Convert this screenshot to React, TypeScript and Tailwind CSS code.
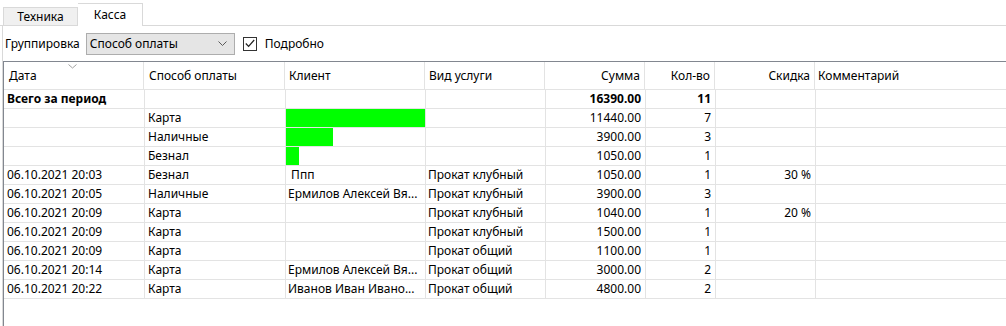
import React from "react";

type Row = {
  date?: string;
  method?: string;
  client?: string;
  bar?: number;
  service?: string;
  sum?: string;
  qty?: string;
  disc?: string;
  bold?: boolean;
};

const rows: Row[] = [
  { date: "Всего за период", sum: "16390.00", qty: "11", bold: true },
  { method: "Карта", bar: 11440, sum: "11440.00", qty: "7" },
  { method: "Наличные", bar: 3900, sum: "3900.00", qty: "3" },
  { method: "Безнал", bar: 1050, sum: "1050.00", qty: "1" },
  { date: "06.10.2021 20:03", method: "Безнал", client: "\u00a0Ппп", service: "Прокат клубный", sum: "1050.00", qty: "1", disc: "30 %" },
  { date: "06.10.2021 20:05", method: "Наличные", client: "Ермилов Алексей Вя...", service: "Прокат клубный", sum: "3900.00", qty: "3" },
  { date: "06.10.2021 20:09", method: "Карта", service: "Прокат клубный", sum: "1040.00", qty: "1", disc: "20 %" },
  { date: "06.10.2021 20:09", method: "Карта", service: "Прокат клубный", sum: "1500.00", qty: "1" },
  { date: "06.10.2021 20:09", method: "Карта", service: "Прокат общий", sum: "1100.00", qty: "1" },
  { date: "06.10.2021 20:14", method: "Карта", client: "Ермилов Алексей Вя...", service: "Прокат общий", sum: "3000.00", qty: "2" },
  { date: "06.10.2021 20:22", method: "Карта", client: "Иванов Иван Ивано...", service: "Прокат общий", sum: "4800.00", qty: "2" },
];

const cell = "h-full border-r border-[#e3e3e3] overflow-hidden whitespace-nowrap flex items-center";

export default function App() {
  return (
    <div className="w-[1006px] h-[326px] bg-white overflow-hidden text-[12px] text-black font-['Noto_Sans',sans-serif] leading-[16px]">
      {/* Tabs */}
      <div className="flex items-end h-[26px]">
        <div className="w-[3px] h-px bg-[#d9d9d9]" />
        <div className="w-[75px] h-[19px] bg-[#f0f0f0] border border-[#d9d9d9] flex items-center justify-center pt-[1px]">
          Техника
        </div>
        <div className="w-[65px] h-[23px] bg-white border border-b-0 border-l-0 border-[#d9d9d9] flex items-center justify-center pb-[1px]">
          Касса
        </div>
        <div className="flex-1 h-px bg-[#d9d9d9]" />
      </div>

      {/* Panel */}
      <div className="ml-[2px] border-l border-[#d9d9d9] h-[300px] flex flex-col">
        {/* Toolbar */}
        <div className="h-[35px] flex items-center pl-[2px] shrink-0">
          <span>Группировка</span>
          <div className="ml-[6px] w-[149px] h-[22px] bg-[#e5e5e5] border border-[#adadad] flex items-center pl-[3px] pr-[7px]">
            <span className="flex-1">Способ оплаты</span>
            <svg width="9" height="5" viewBox="0 0 9 5">
              <polyline points="0.5,0.5 4.5,4.5 8.5,0.5" fill="none" stroke="#5a5a5a" strokeWidth="1" />
            </svg>
          </div>
          <div className="ml-[8px] w-[14px] h-[14px] border border-[#333333] bg-white flex items-center justify-center">
            <svg width="10" height="9" viewBox="0 0 10 9">
              <polyline points="0.8,4.5 3.6,7.4 9.2,1" fill="none" stroke="#222" strokeWidth="1.2" />
            </svg>
          </div>
          <span className="ml-[8px]">Подробно</span>
        </div>

        {/* Table */}
        <div className="flex-1 border-t border-l border-[#828790] flex flex-col">
          {/* Header */}
          <div className="flex h-[28px] border-b border-[#e3e3e3] shrink-0">
            <div className="relative w-[140px] h-full border-r border-[#e3e3e3] flex items-center pl-[5px]">
              Дата
              <svg className="absolute left-[64px] top-[2px]" width="9" height="5" viewBox="0 0 9 5">
                <polyline points="0.5,0.5 4.5,4 8.5,0.5" fill="none" stroke="#a0a0a0" strokeWidth="1" />
              </svg>
            </div>
            <div className="w-[141px] h-full border-r border-[#e3e3e3] flex items-center pl-[5px]">Способ оплаты</div>
            <div className="w-[140px] h-full border-r border-[#e3e3e3] flex items-center pl-[4px]">Клиент</div>
            <div className="w-[120px] h-full border-r border-[#e3e3e3] flex items-center pl-[4px]">Вид услуги</div>
            <div className="w-[100px] h-full border-r border-[#e3e3e3] flex items-center justify-end pr-[4px]">Сумма</div>
            <div className="w-[70px] h-full border-r border-[#e3e3e3] flex items-center justify-end pr-[4px]">Кол-во</div>
            <div className="w-[100px] h-full border-r border-[#e3e3e3] flex items-center justify-end pr-[4px]">Скидка</div>
            <div className="flex-1 h-full flex items-center pl-[3px]">Комментарий</div>
          </div>

          {rows.map((r, i) => (
            <div key={i} className={`flex h-[19px] border-b border-[#e3e3e3] shrink-0 ${r.bold ? "font-bold" : ""}`}>
              <div className={`${cell} w-[141px] pl-[3px]`}>{r.date}</div>
              <div className={`${cell} w-[141px] pl-[3px]`}>{r.method}</div>
              <div className={`${cell} w-[140px] ${r.bar ? "" : "pl-[2px]"}`}>
                {r.bar ? (
                  <div className="h-full bg-[#00ff00]" style={{ width: Math.round((r.bar / 11440) * 139) }} />
                ) : (
                  r.client
                )}
              </div>
              <div className={`${cell} w-[120px] pl-[2px]`}>{r.service}</div>
              <div className={`${cell} w-[100px] justify-end pr-[4px]`}>{r.sum}</div>
              <div className={`${cell} w-[70px] justify-end pr-[4px]`}>{r.qty}</div>
              <div className={`${cell} w-[100px] justify-end pr-[4px]`}>{r.disc}</div>
              <div className="flex-1 h-full" />
            </div>
          ))}
        </div>
      </div>
    </div>
  );
}
